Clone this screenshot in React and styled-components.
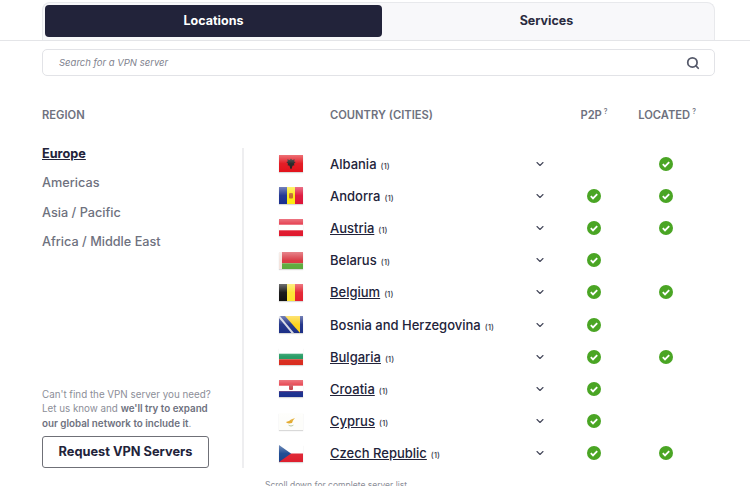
import React from "react";
import styled, { createGlobalStyle, css } from "styled-components";
import { ChevronDown, Search } from "lucide-react";

const regions = ["Europe", "Americas", "Asia / Pacific", "Africa / Middle East"];

const countries = [
  { name: "Albania", flag: "al", located: true },
  { name: "Andorra", flag: "ad", p2p: true, located: true },
  { name: "Austria", flag: "at", p2p: true, located: true, link: true },
  { name: "Belarus", flag: "by", p2p: true },
  { name: "Belgium", flag: "be", p2p: true, located: true, link: true },
  { name: "Bosnia and Herzegovina", flag: "ba", p2p: true },
  { name: "Bulgaria", flag: "bg", p2p: true, located: true, link: true },
  { name: "Croatia", flag: "hr", p2p: true, link: true },
  { name: "Cyprus", flag: "cy", p2p: true, link: true },
  { name: "Czech Republic", flag: "cz", p2p: true, located: true, link: true },
];

const flagArt = {
  al: (
    <>
      <rect width="24" height="17" fill="#e2131c" />
      <path d="M12 3.500l1.200 1.600 2.600-.9-.7 2.400 1.600.3-1.800 1.800.6 1.500-2 .5-.7 2.500-.8 1-.8-1-.7-2.500-2-.5.6-1.500-1.800-1.800 1.600-.3-.7-2.400 2.600.9z" fill="#222" />
    </>
  ),
  ad: (
    <>
      <rect width="8" height="17" fill="#1a2f8f" />
      <rect x="8" width="8" height="17" fill="#fde910" />
      <rect x="16" width="8" height="17" fill="#dd1338" />
      <rect x="10" y="6" width="4" height="5.500" rx="1" fill="#c4672b" />
    </>
  ),
  at: (
    <>
      <rect width="24" height="17" fill="#e0182d" />
      <rect y="5.700" width="24" height="5.600" fill="#fff" />
    </>
  ),
  by: (
    <>
      <rect width="24" height="11.300" fill="#d7333d" />
      <rect y="11.300" width="24" height="5.700" fill="#5cab3c" />
      <rect width="3" height="17" fill="#f4e4de" />
    </>
  ),
  be: (
    <>
      <rect width="8" height="17" fill="#111" />
      <rect x="8" width="8" height="17" fill="#fde42f" />
      <rect x="16" width="8" height="17" fill="#e3202e" />
    </>
  ),
  ba: (
    <>
      <rect width="24" height="17" fill="#1c2f86" />
      <path d="M6 0h15v17z" fill="#fdd116" />
      <path d="M1 0l14 17h-2.600L0 2V0z" fill="#f4f4f4" opacity=".85" />
    </>
  ),
  bg: (
    <>
      <rect width="24" height="17" fill="#fff" />
      <rect y="5.700" width="24" height="5.600" fill="#1f9960" />
      <rect y="11.300" width="24" height="5.700" fill="#d92b1e" />
    </>
  ),
  hr: (
    <>
      <rect width="24" height="17" fill="#e2202e" />
      <rect y="5.700" width="24" height="5.600" fill="#fff" />
      <rect y="11.300" width="24" height="5.700" fill="#1b2f8e" />
      <rect x="10" y="4.500" width="4" height="5.500" rx="1" fill="#c8414a" />
    </>
  ),
  cy: (
    <>
      <rect width="24" height="17" fill="#fdfdfa" />
      <path d="M7 9l3-1 2-1.500 4-1.500-2 2.500-1 2.500-3 .5-2-.5z" fill="#e3a828" />
      <path d="M9 11.500q3 1.800 6 0-1 2-3 2t-3-2z" fill="#7d9a4e" opacity=".6" />
    </>
  ),
  cz: (
    <>
      <rect width="24" height="8.500" fill="#fff" />
      <rect y="8.500" width="24" height="8.500" fill="#de1f2e" />
      <path d="M0 0l12 8.500L0 17z" fill="#17458f" />
    </>
  ),
};

function Flag({ code }) {
  return (
    <FlagImage viewBox="0 0 24 17" aria-hidden="true">
      <defs>
        <linearGradient id="gloss" x1="0" y1="0" x2="0" y2="1">
          <stop offset="0" stopColor="#fff" stopOpacity=".4" />
          <stop offset=".5" stopColor="#fff" stopOpacity=".05" />
          <stop offset="1" stopColor="#fff" stopOpacity="0" />
        </linearGradient>
      </defs>
      {flagArt[code]}
      <rect width="24" height="17" fill="url(#gloss)" />
    </FlagImage>
  );
}

function Check() {
  return (
    <svg width="14" height="14" viewBox="0 0 14 14" aria-hidden="true">
      <circle cx="7" cy="7" r="7" fill="#4aa524" />
      <path d="M3.800 7.200l2.200 2.200 4.200-4.300" fill="none" stroke="#fff" strokeWidth="1.800" />
    </svg>
  );
}

export default function App() {
  return (
    <>
      <GlobalStyle />
      <TopBar>
        <Tabs>
          <Tab $active>Locations</Tab>
          <Tab>Services</Tab>
        </Tabs>
      </TopBar>
      <Content>
        <SearchBox>
          <span>Search for a VPN server</span>
          <Search size={14} strokeWidth={3} color="#55596a" />
        </SearchBox>
        <Heads>
          <RegionHead>REGION</RegionHead>
          <TableHead>
            <HeadName>COUNTRY (CITIES)</HeadName>
            <HeadFlag>
              P2P<sup>?</sup>
            </HeadFlag>
            <HeadFlag $shift={3}>
              LOCATED<sup>?</sup>
            </HeadFlag>
          </TableHead>
        </Heads>
        <Columns>
          <Sidebar>
            <RegionList>
              {regions.map((r, i) => (
                <Region key={r} $active={i === 0}>
                  {r}
                </Region>
              ))}
            </RegionList>
            <Help>
              <HelpText>
                Can't find the VPN server you need? Let us know and{" "}
                <b>we'll try to expand our global network to include it</b>.
              </HelpText>
              <RequestButton>Request VPN Servers</RequestButton>
            </Help>
          </Sidebar>
          <Table>
            {countries.map((c) => (
              <Row key={c.name}>
                <Flag code={c.flag} />
                <Name>
                  <CountryName $link={c.link}>{c.name}</CountryName>
                  <Cities>(1)</Cities>
                </Name>
                <ChevronDown size={12} strokeWidth={2.2} color="#44475a" />
                <Mark>{c.p2p && <Check />}</Mark>
                <Mark>{c.located && <Check />}</Mark>
              </Row>
            ))}
          </Table>
        </Columns>
        <ScrollNote>Scroll down for complete server list</ScrollNote>
      </Content>
    </>
  );
}

const GlobalStyle = createGlobalStyle`
  html, body {
    margin: 0;
    height: 486px;
    overflow: hidden;
    background: #fff;
    font-family: Inter, "Open Sans", sans-serif;
    color: #22233a;
  }
  * {
    box-sizing: border-box;
  }
`;

const rowGrid = css`
  display: grid;
  grid-template-columns: 51px 204px 14px 92px 51px;
  align-items: center;
`;

const TopBar = styled.div`
  height: 41px;
  padding: 2px 35px 0 42px;
  border-bottom: 1px solid #e4e5e8;
`;
const Tabs = styled.div`
  height: 38px;
  display: grid;
  grid-template-columns: 337px 1fr;
  padding: 2px 3px 3px 2px;
  background: #f8f8fa;
  border: 1px solid #e8e9ec;
  border-bottom: 0;
  border-radius: 8px 8px 0 0;
`;
const Tab = styled.div`
  display: flex;
  align-items: center;
  justify-content: center;
  padding-bottom: 1px;
  border-radius: 4px;
  font-size: 12.500px;
  font-weight: 700;
  background: ${(p) => (p.$active ? "#22233a" : "transparent")};
  color: ${(p) => (p.$active ? "#fff" : "#2b2c40")};
`;
const Content = styled.div`
  padding: 8px 35px 0 42px;
`;
const SearchBox = styled.div`
  height: 27px;
  display: flex;
  align-items: center;
  justify-content: space-between;
  padding: 0 14px 0 16px;
  border: 1px solid #e2e3e7;
  border-radius: 5px;
  font-size: 9.500px;
  font-style: italic;
  color: #80828e;
`;
const Heads = styled.div`
  display: flex;
  margin-top: 31px;
  height: 16px;
  align-items: center;
  font-size: 11.200px;
  font-weight: 600;
  color: #6e717e;
`;
const RegionHead = styled.div`
  width: 237px;
`;
const TableHead = styled.div`
  ${rowGrid}
`;
const HeadName = styled.div`
  grid-column: 2 / 4;
`;
const HeadFlag = styled.div`
  justify-self: center;
  white-space: nowrap;
  margin-left: ${(p) => p.$shift || 0}px;
  sup {
    font-size: 7px;
    font-weight: 500;
    margin-left: 2px;
    line-height: 0;
  }
`;
const Columns = styled.div`
  display: flex;
  margin-top: 25px;
  height: 322px;
`;
const Sidebar = styled.div`
  width: 202px;
  height: 320px;
  display: flex;
  flex-direction: column;
  justify-content: space-between;
  border-right: 2px solid #eeeef0;
`;
const RegionList = styled.div`
  display: flex;
  flex-direction: column;
  gap: 13.300px;
  margin-top: -2px;
`;
const Region = styled.div`
  height: 16px;
  line-height: 16px;
  font-size: 12.700px;
  font-weight: ${(p) => (p.$active ? 700 : 500)};
  color: ${(p) => (p.$active ? "#22233a" : "#6e717e")};
  text-decoration: ${(p) => (p.$active ? "underline" : "none")};
`;
const Help = styled.div`
  font-size: 9.800px;
  line-height: 14.300px;
  color: #8c8e98;
  b {
    font-weight: 600;
    color: #6e717e;
  }
`;
const HelpText = styled.p`
  margin: 0 0 5px;
  width: 172px;
`;
const RequestButton = styled.div`
  width: 167px;
  height: 32px;
  display: flex;
  align-items: center;
  justify-content: center;
  border: 1px solid #6f7077;
  border-radius: 3px;
  font-size: 12.800px;
  font-weight: 700;
  color: #22233a;
`;
const Table = styled.div`
  padding-left: 35px;
  margin-top: -0.500px;
`;
const Row = styled.div`
  ${rowGrid}
  height: 32.200px;
`;
const FlagImage = styled.svg`
  width: 24px;
  height: 17px;
  display: block;
  box-shadow: 0 1px 1px rgba(0, 0, 0, 0.15);
`;
const Name = styled.div`
  display: flex;
  align-items: baseline;
  gap: 4px;
  white-space: nowrap;
`;
const CountryName = styled.span`
  font-size: 13px;
  font-weight: 500;
  text-decoration: ${(p) => (p.$link ? "underline" : "none")};
`;
const Cities = styled.span`
  font-size: 8px;
  font-weight: 500;
  color: #3c3e50;
`;
const Mark = styled.div`
  display: flex;
  justify-content: center;
`;
const ScrollNote = styled.div`
  padding-left: 223px;
  margin-top: 10px;
  font-size: 8.500px;
  color: #8c8e98;
`;
